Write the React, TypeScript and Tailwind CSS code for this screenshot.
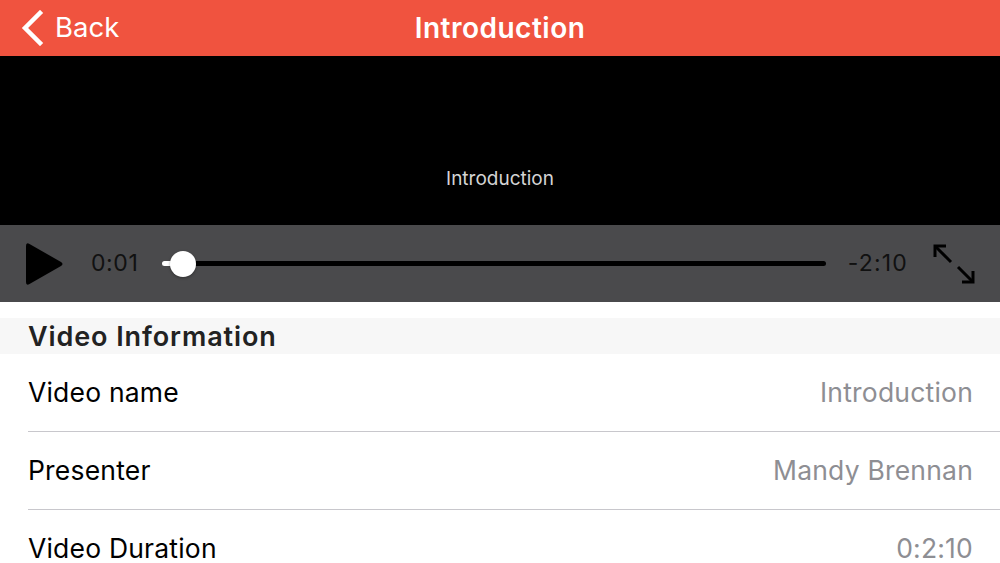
import React from 'react';

const font = { fontFamily: 'Inter, "Noto Sans", sans-serif' };

function BackChevron() {
  return (
    <svg width="26" height="36" viewBox="0 0 26 36" fill="none">
      <path d="M20 3 L5 18 L20 33" stroke="white" strokeWidth="4.5" strokeLinecap="square" strokeLinejoin="miter" />
    </svg>
  );
}

function PlayIcon() {
  return (
    <svg width="42" height="46" viewBox="0 0 42 46">
      <path d="M4 5 Q4 1 7.5 3 L39 21 Q42 23 39 25 L7.5 43 Q4 45 4 41 Z" fill="black" />
    </svg>
  );
}

function ExpandIcon() {
  return (
    <svg width="44" height="42" viewBox="0 0 44 42" fill="none" stroke="black" strokeWidth="3">
      <path d="M3 14 V3 H14" />
      <path d="M3 3 L19 19" />
      <path d="M41 28 V39 H30" />
      <path d="M41 39 L26 24" />
    </svg>
  );
}

function InfoRow({ label, value, last }: { label: string; value: string; last?: boolean }) {
  return (
    <div className="pl-[28px]">
      <div className={`flex h-[78px] items-center justify-between pr-[27px] ${last ? '' : 'border-b border-[#c8c7cc]'}`}>
        <span className="text-[26.5px] tracking-[0.2px] text-black">{label}</span>
        <span className="text-[26.5px] tracking-[0.2px] text-[#8e8e93]">{value}</span>
      </div>
    </div>
  );
}

export default function App() {
  return (
    <div className="h-[563px] w-[1000px] overflow-hidden bg-white" style={font}>
      <header className="relative flex h-[56px] items-center justify-center bg-[#f0533f]">
        <div className="absolute left-[20px] top-0 flex h-full items-center gap-[9px] text-white">
          <BackChevron />
          <span className="text-[27.5px]">Back</span>
        </div>
        <h1 className="text-[28px] font-semibold tracking-[0.5px] text-white">Introduction</h1>
      </header>

      <div className="relative h-[246px] bg-black">
        <div className="flex h-full items-center justify-center">
          <span className="text-[19px] text-[#d4d4d4]">Introduction</span>
        </div>
        <div className="absolute bottom-0 left-0 right-0 flex h-[77px] items-center bg-[#4a4a4c] pl-[22px] pr-[24px]">
          <PlayIcon />
          <span className="ml-[27px] text-[23px] tracking-[0.6px] text-[#111]">0:01</span>
          <div className="ml-[24px] mr-[22px] flex flex-1 items-center">
            <div className="h-[5px] w-[10px] rounded-l-full bg-white" />
            <div className="-ml-[2px] h-[26px] w-[26px] rounded-full bg-white shadow-[0_1px_3px_rgba(0,0,0,0.35)]" />
            <div className="h-[5px] flex-1 rounded-r-full bg-black" />
          </div>
          <span className="text-[23px] tracking-[1.2px] text-[#111]">-2:10</span>
          <div className="ml-[24px]">
            <ExpandIcon />
          </div>
        </div>
      </div>

      <div className="mt-[16px] flex h-[36px] items-center bg-[#f7f7f7] px-[28px]">
        <h2 className="pt-[2px] text-[27px] font-semibold tracking-[0.9px] text-[#222]">Video Information</h2>
      </div>

      <InfoRow label="Video name" value="Introduction" />
      <InfoRow label="Presenter" value="Mandy Brennan" />
      <InfoRow label="Video Duration" value="0:2:10" last />
    </div>
  );
}
